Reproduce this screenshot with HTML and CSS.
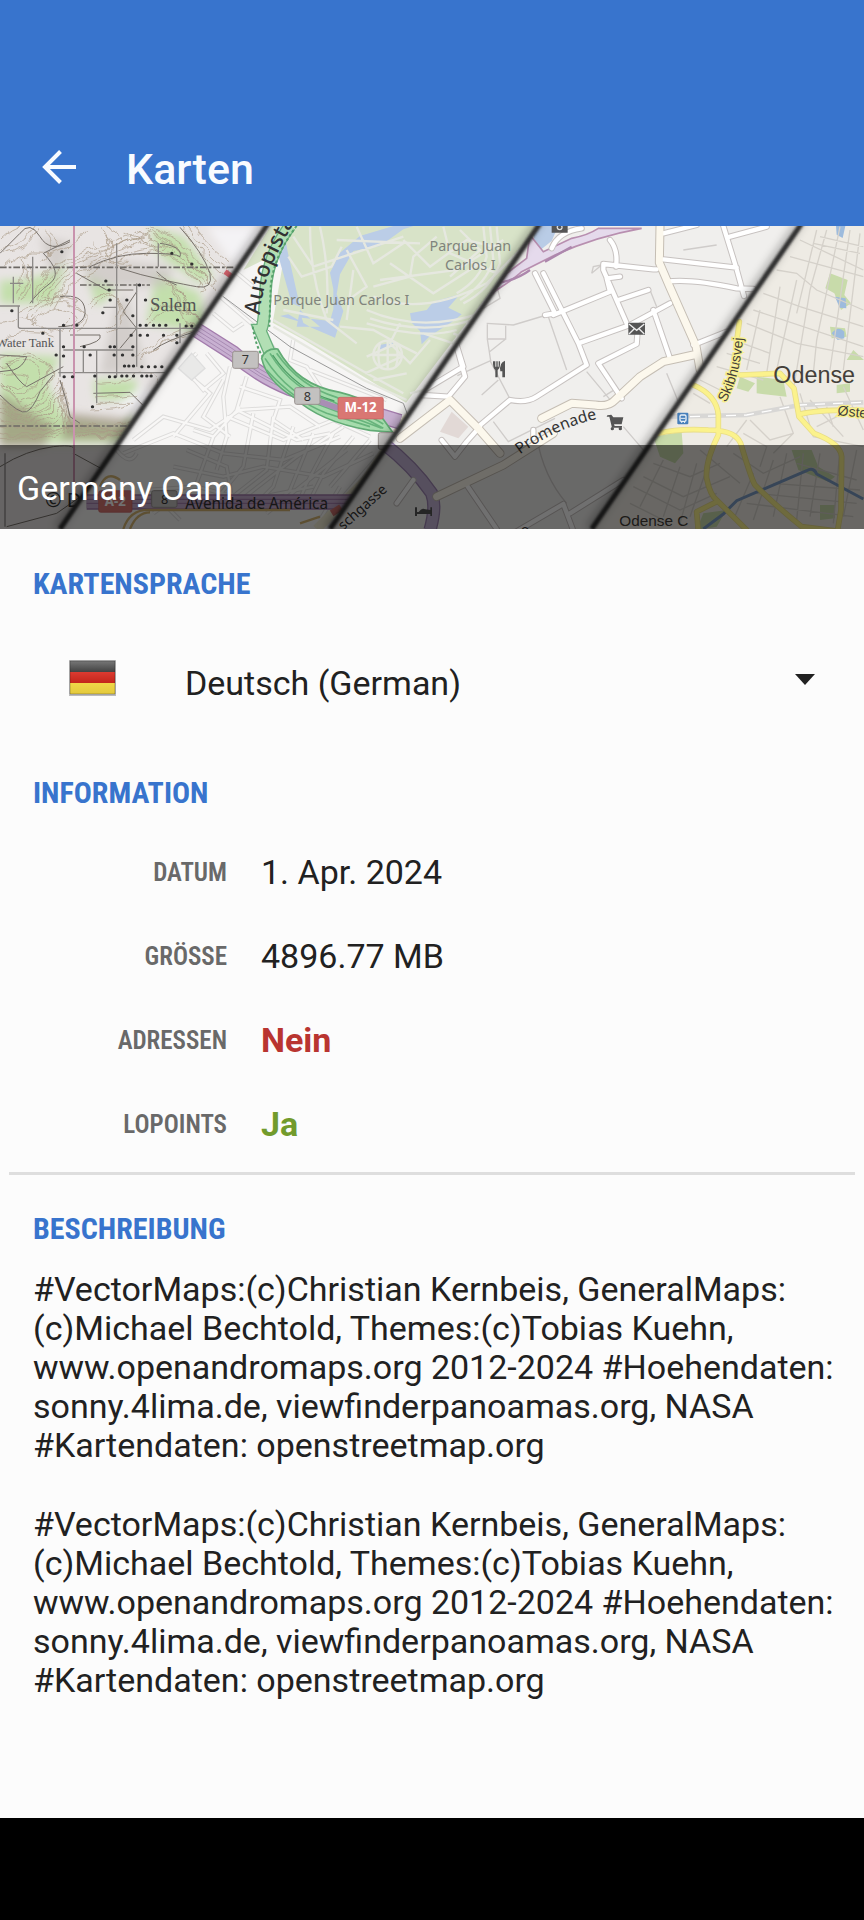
FILE: index.html
```html
<!DOCTYPE html>
<html lang="de">
<head>
    <meta charset="UTF-8">
    <meta name="viewport" content="width=device-width, initial-scale=1">
    <title>Karten</title>
    <link rel="stylesheet" href="styles.css">
</head>
<body>
<header class="toolbar">
    <button type="button" class="back" aria-label="Zurück">
        <svg viewBox="0 0 34 34" width="34" height="34"><path d="M18.500 1.500 3 17l15.500 15.500M3 17h31"/></svg>
    </button>
    <h1>Karten</h1>
</header>
<main>
    <div class="hero">
        <svg class="map" viewBox="0 18 2592 909" preserveAspectRatio="xMidYMid slice">
            <defs>
                <clipPath id="c1"><path d="M0 0H812L180 927H0z"/></clipPath>
                <clipPath id="c2"><path d="M812 0H1627L990 927H180z"/></clipPath>
                <clipPath id="c3"><path d="M1627 0H2412L1775 927H990z"/></clipPath>
                <clipPath id="c4"><path d="M2412 0H2592V927H1775z"/></clipPath>
                <filter id="soft" x="-10%" y="-10%" width="120%" height="120%"><feGaussianBlur stdDeviation="3"/></filter>
                <filter id="shade" x="-10%" y="-10%" width="120%" height="120%"><feGaussianBlur stdDeviation="13"/></filter>
                <filter id="wavy" x="0" y="0" width="100%" height="100%">
                    <feTurbulence type="fractalNoise" baseFrequency="0.02" numOctaves="2" seed="4"/>
                    <feDisplacementMap in="SourceGraphic" scale="40" xChannelSelector="R" yChannelSelector="G"/>
                </filter>
                <!-- Straßen, doppelt gezeichnet: Rand und Fläche -->
                <path id="streets2" d="M640 280l60 50 30-20M655 225l110 95M700 150l60 50M590 400l-40 40 60 70 60-50-50-60M560 460l70 60-110 130M670 480l-60 110 80 60M690 440l-20 90 10 120-30 100M740 470l-30 100 180 90 100-20M720 560l-80 90-60-20M400 660l90-70 140 40 90-60 150-10 90 60M370 700l150-60 150 60 180 20 170-70M640 650l-50 140-130 90M760 580l-30 160-100 120M820 590l-20 160-140 110M880 620l-60 180-60 60M940 640l-70 170-50 50M1000 640l-80 150-30 70M1060 650l-90 110-50 100M1110 660l-120 140M520 740l150 30 120-30 180 30 150-70M440 810l150-10 150 40 200-40M380 850l100-10 60 60M560 690l120 50 20 120M720 500l120 40-20 60 90 60M680 590l170 70 150-60 110 50M780 330l60 80-20 60M880 360l-10 60 50 20 40 60-40 10M930 450l230 90M350 690q40 50 60 10M710 850l180-140 140-90M800 880l240-190M1020 800l-60 100M1150 690l-180 210M1100 860l-40 60"/>
                <path id="park" d="M865 110l40 60 90-30 30-60M880 50l60 90 90-30 180-60M930 20q0 150 50 280l90 70M960 20q30 130 20 260M1040 90l60 110-70 50M1010 60l250 10M1070 20l50 110 90-60M1140 180l230-30 140-90M1170 130l130 90 140-90M1120 230q150 60 340-40l100-100M1100 270q160 70 340 10 70-50 130-170M1110 295q180 60 350-10M1100 310q170 50 270 20M1020 320l100 10 90 50M1120 200l110-30 10-60 70-60M1210 60l80 80 110-80 80 20M1380 30l60 60-90 80M1330 20l20 80 140 60M1450 20l10 90q-20 70-90 110M1470 20l10 100q-20 70-100 120M1490 20l10 110q-30 80-110 120M1200 310l-30 60 60 60 60-70M1100 410l90-40 60 30M1095 460l110-50M1270 340l90 30 60-70M1330 440l120-60-90-40M1320 460l50 80-60-40-80 20M1350 480l90-40M1120 480l100-20M820 300l280 160 110 60M820 320l270 160 130 60M1415 440l-10 80M1450 330l-40 100M1000 300l-150-30M1060 150l-20 150"/>
                <path id="streets3" d="M1240 530L1390 440 1365 360M1345 530l-80-5M1345 530l50-60-25-90M1435 620L1530 540Q1580 550 1610 530L1760 435 1735 370 1630 160M1440 620l-40 45-35 45-40-50M1605 160l60 120-30 5M1660 285L1830 215M1735 370L1890 315 2010 250M1880 310L1810 150 1810 132 1960 148 1970 148M1830 215l-10-40 40-5M1855 240l90-30M1830 60q25 30 18 80M1865 535L1795 430 1910 372 1912 345M1960 270l50 145M1990 118l220 25M2000 185q70-10 210 20l50 2M1990 40l100-25M2170 18l40 130 22 80M2190 50l110-30M2080 375l100-40M1600 655v-25M1400 795l90 132M1690 852l28 75M1540 940l150-88M1710 880l160-100M1240 780l-50 70M1655 85q20-50 90-60"/>
                <path id="main3" d="M1980 18l-2 110 30 70 80 180 12 70M2080 405l-90 20-70 45-75 70q-20 22-60 15l-70-5-90 45M1200 655L1350 540 1430 620 1500 700M1310 830l200-95 150-95"/>
                <path id="minor4" d="M2400 60l190 90M2370 110l220 60M2330 150l60 10 60 50 140 60M2290 220l110 40 190 60M2260 270l330 110M2240 310l150 60 200 40M2450 30l-60 250M2480 30l-50 180-50 300M2520 20l-70 340-10 100M2550 30l-60 420M2580 40l-50 410M2340 200l-40 260M2390 180l-60 270M2280 270l-40 180M2440 70l140 30M2460 50l130 30M2200 360l110 40M2180 400l100 30M2150 440l140 40M2100 480l60 30M2080 520l50 30M2400 520l40 130 150 30M2340 530l40 110-60 60M2430 540l100 110M2480 560l20 60M2250 600l60 60 70-20M2230 640l70 40-20 60M2200 700l90 60 110-50M2180 680l60-80M1960 730l110 40 90-40M1930 770l120 60 140-60M1900 800l140 70 110-50M1990 720l-70 140M2040 740l-50 150M2090 730l-50 180M2140 690l-70 200M2260 760l-60 140M2320 720l-60 180M2360 700l-40 190M2410 700l-20 200M2460 700l-30 190M2520 690l-20 220M2570 690l-40 200M2270 820l300 30M2240 850l320 40M2320 790l260 20M2390 730l180 50M1890 850l120 60M2100 690l120 100M2530 500l60 130M2450 620l80-40 60 10"/>
                <path id="yellow4" d="M2218 305l-8 60M2220 465l120-5 42 45 15 85 45 50q80 30 83 70l-2 160-10 60M2397 583q60-15 190-12M2080 495q70 30 75 90l0 60q-40 80-35 130 10 50 30 65l90 90M1975 640q60-15 150-10 90 0 100 50 30 100 40 115 60 60 140 125l160 20M2150 845l-60 30 5 60"/>
            </defs>

            <!-- topografische Karte -->
            <g clip-path="url(#c1)">
                <path fill="#e8e4e3" d="M0 0h820v940H0z"/>
                <g filter="url(#shade)">
                    <path fill="#c3dfac" d="M0 180q110 10 200-50l-40 120H0zM260 160l90 50-60 50zM470 160l130 60 20 120-180-30zM450 20l100 30 90 120-40 20-130-90zM0 400l180 10-40 80 60 110 160 20 40-40v90H0zM280 480h130v60H290z"/>
                    <path fill="#8f836c" opacity=".6" d="M200 580l200 20v60H180zM0 520l170 100-40 60H0z"/>
                    <path fill="#c4bfbb" opacity=".6" d="M120 50l100 20-60 120zM250 110l270 30-20 60H260zM380 220l60 240H300l50-210z"/>
                    <path fill="#f4f3f5" d="M620 20h180l-90 130zM430 500l60 30-60 60-80-40z"/>
                </g>
                <g class="contour light" filter="url(#wavy)">
                    <path d="M0 60Q40 20 70 18M0 90Q70 80 100 18M10 140Q60 90 130 100T260 30M110 230Q120 130 260 90T420 30M130 240Q170 150 270 110T450 40M150 260Q190 170 290 130T520 70M40 230Q90 170 60 110M60 240Q110 170 80 120M80 300q50-90 130-60t20 90M90 310q70-60 120-40t0 60M260 250q60-60 90-10t-30 80M380 40q70 20 160 90t50 70M400 30q90 30 160 100t60 60M430 20q80 30 150 110t50 60M450 18q90 40 150 110t40 70M540 18q70 100 130 150M560 18q60 90 130 140M580 18q50 70 110 110M470 160q50 10 60 80t60 80M490 170q50 20 60 70t60 60M500 190q50 20 60 60t50 50M440 300q40-60 100-40t70 60M410 420q60-80 170-100M430 410q60-50 130-60M0 420q80-30 130 0t-30 110l-40 20-60-60M0 440q70-20 110 0t-30 80l-30 10-50-50M0 460q50-10 80 0t-20 50l-60-20M0 540q70 50 130 0t50-60l30 120M0 560q80 50 140 0t40-50l20 110M0 580q90 50 150-10t30-30l20 80M0 600q90 40 150-10t30 0l10 40M0 620q90 30 180 0M0 640q90 20 180-10M0 655q120 10 200-20M120 660q60-60 130-50t150 50M200 590q80 60 200 10M210 620q60 40 180 0M220 640q70 20 150 0M270 490q70 10 130-20t80 40M280 530q70 0 140-10M290 550l110 0M270 570q80 0 120-15M300 30q40 20 20 60t60 40M280 60q30 20 20 60M320 20q60 20 50 50M130 30q40 30 20 60t-30 30M150 30q40 30 30 60M0 310q80-30 120 10t90-20M0 360q80-40 160-10M60 270q80-10 140-60"/>
                    <path transform="translate(9 12)" d="M0 90Q70 80 100 18M110 230Q120 130 260 90T420 30M130 240Q170 150 270 110T450 40M150 260Q190 170 290 130T520 70M40 230Q90 170 60 110M80 300q50-90 130-60t20 90M260 250q60-60 90-10t-30 80M380 40q70 20 160 90t50 70M430 20q80 30 150 110t50 60M470 160q50 10 60 80t60 80M500 190q50 20 60 60t50 50M440 300q40-60 100-40t70 60M410 420q60-80 170-100M0 420q80-30 130 0t-30 110l-40 20-60-60M0 540q70 50 130 0t50-60l30 120M0 560q80 50 140 0t40-50l20 110M0 600q90 40 150-10t30 0l10 40M200 590q80 60 200 10M210 620q60 40 180 0M300 30q40 20 20 60t60 40"/>
                </g>
                <g class="contour">
                    <path d="M0 100L60 40q30-40 60 10t90 15M90 250q20-30 60-60t-20-90l80-40M270 140q80-40 170-40t100 10q10-30-60-40M360 145q60 20 130 35t100 20q50 10 40-40Q610 100 540 22M470 155q30 30 60 40M180 230q70-10 75 40t-80 50M230 160l90 50 80 0M0 405l80 5q-10 30-40 40l-40 5M20 430q40 60 60 70l110-60M0 525q60 60 80 50t40-60l40-50M280 520l110-3 40 40M180 480q20 60 30 110l30 20M460 390q40-30 140-60M210 345l90 0q10 20-60 35M0 740q80-50 160-60t60 20l110 60M20 920l150-40 100-70M410 215l-40 60 40 50-50 60"/>
                </g>
                <path class="dash" d="M0 142h700M240 195h210M0 618h400"/>
                <path class="track" d="M55 260v60q0 5 10 5h540M180 325v145M175 458h320M190 390h210M350 70v400M410 190v250M250 390v70M290 390v160M0 258h60M40 170v80M30 190h40M98 110v140M475 70v70M310 262h40M540 310v60M15 700v220"/>
                <path stroke="#c993ae" stroke-width="6" fill="none" d="M222 18v780"/>
                <path class="dots" d="M185 95h1M317 183h1M327 210h1M330 240h1M380 240h1M436 240h1M308 278h1M398 287h1M190 316h1M230 316h1M128 340h1M35 272h1M418 195h1M420 316h1M438 316h1M460 316h1M478 316h1M497 316h1M558 318h1M575 318h1M532 300h1M393 346h1M420 346h1M442 346h1M490 346h1M530 346h1M530 368h1M190 380h1M252 380h1M330 380h1M343 380h1M398 380h1M168 405h1M190 408h1M270 405h1M342 405h1M367 405h1M398 405h1M373 438h1M386 438h1M400 438h1M425 440h1M445 440h1M465 440h1M485 440h1M192 470h1M217 470h1M284 468h1M328 470h1M345 470h1M365 468h1M380 468h1M400 468h1M425 468h1M440 468h1M453 468h1M277 560h1M515 100h1M575 132h1"/>
                <text class="serif" x="450" y="272" font-size="56">Salem</text>
                <text class="serif" x="-12" y="382" font-size="38">Water Tank</text>
                <text class="sans" x="135" y="862" font-size="60">© D</text>
                <path stroke="#dd6570" stroke-width="16" d="M675 155l25 18"/>
            </g>

            <!-- Madrid -->
            <g clip-path="url(#c2)">
                <path fill="#f6f5f4" d="M180 0h1450v940H180z"/>
                <path fill="#d8e3c8" d="M730 150L812 18h56l-50 290 90 50 310 190L1460 230 1627 0H880l-50 100z"/>
                <path fill="#bbcde7" d="M850 20l12 70 38 170-25-10-45-160zM890 320l70 0-60-50M840 288l70 20-5-15 85 10 10-35 0-60-10-50 30-60 60-50 100-30 60-40h120l-150 50-70 50-80 15-40 70-10 60 20 50-25 80-70-30-70-40zM1230 280l50-10 20-25 80-22-35 40 20 10 20 10-25 20-70 45-25 25-5-40-25-25zM1140 375l40-8-5 15-40 10z"/>
                <use href="#park" class="parkpath"/>
                <circle class="parkpath" cx="1163" cy="405" r="43"/><path class="parkpath" d="M1120 405h86M1163 362v86M1140 370q-10 35 0 70M1188 370q10 35 0 70"/>
                <use href="#streets2" class="casing2"/><use href="#streets2" class="road2"/>
                <path fill="#e9e9e8" stroke="#dedede" stroke-width="4" d="M575 400l40 45-40 35-40-35z"/>
                <path stroke="#f1ecd3" stroke-width="28" fill="none" d="M950 927l150-150 120-180 240-190"/>
                <path class="rail" d="M670 230l200 150 230 125 110 45 30 80"/>
                <path stroke="#a37cac" stroke-width="47" fill="none" d="M590 330l110 70q80 70 170 105l330 100"/>
                <path stroke="#c8b0d1" stroke-width="39" fill="none" d="M590 330l110 70q80 70 170 105l330 100"/>
                <path stroke="#a88cb3" stroke-width="3" fill="none" d="M590 330l110 70q80 70 170 105M590 342l105 68q80 65 170 100M590 318l110 70q80 70 170 105"/>
                <path stroke="#9f78a8" stroke-width="46" d="M260 846h820"/><path stroke="#c4aacc" stroke-width="38" d="M260 846h820"/><path stroke="#9f78a8" stroke-width="3" d="M260 838h820M260 850h820"/>
                <path class="ochre" d="M300 800q20-50 60-20M370 927q20-60 80-57h420M390 927q20-50 60-50M900 910l60-20"/>
                <g fill="none">
                    <path stroke="#69b07c" stroke-width="38" d="M870 18Q800 110 796 220T780 330l30 70"/>
                    <path stroke="#b2dfb4" stroke-width="30" d="M870 18Q800 110 796 220T780 330l30 70"/>
                    <path stroke="#55a16a" stroke-width="6" stroke-dasharray="8 7" d="M890 18Q820 110 812 200l-4 120M758 320q10 60 30 90"/>
                    <path fill="#a5dcac" stroke="#62ab75" stroke-width="5" d="M785 415q10-30 48-28 60 110 187 130 60 15 100 40l58 80-68-6q-150-25-230-100-80-50-95-116z"/>
                    <path stroke="#68b47c" stroke-width="5" d="M810 400q70 115 190 145l150 80M830 400q70 100 180 132l140 80M795 415q70 110 190 150l160 60M800 450q80 90 180 130l130 40"/>
                    <path stroke="#4c9c65" stroke-width="4" d="M818 405q70 105 185 138"/>
                </g>
                <path stroke="#a98eb4" stroke-width="18" d="M960 545l55 20"/>
                <g fill="#c3c1c0" stroke="#99928f" stroke-width="3">
                    <rect x="698" y="394" width="77" height="51" rx="6"/><rect x="884" y="503" width="76" height="50" rx="6"/>
                    <rect x="455" y="812" width="76" height="50" rx="6"/><rect x="1135" y="638" width="76" height="50" rx="6"/>
                </g>
                <g fill="#d97773" stroke="#c65f5f" stroke-width="2"><rect x="1014" y="532" width="136" height="65" rx="6"/><rect x="296" y="812" width="100" height="65" rx="6"/></g>
                <text class="sans" x="736" y="433" font-size="38" text-anchor="middle">7</text>
                <text class="sans" x="922" y="542" font-size="38" text-anchor="middle">8</text>
                <text class="sans" x="494" y="853" font-size="38" text-anchor="middle">8</text>
                <text class="shield" x="1082" y="577" font-size="40">M-12</text>
                <text class="shield" x="346" y="858" font-size="40">A-2</text>
                <text class="sans grey" x="820" y="256" font-size="43">Parque Juan Carlos I</text>
                <text class="sans grey" x="1411" y="93" font-size="43" text-anchor="middle">Parque Juan</text>
                <text class="sans grey" x="1411" y="149" font-size="43" text-anchor="middle">Carlos I</text>
                <text class="sans" x="556" y="866" font-size="46">Avenida de América</text>
                <path id="autop" fill="none" d="M780 285Q785 160 900 -20"/>
                <text class="sans strong" font-size="66"><textPath href="#autop">Autopista</textPath></text>
                <path stroke="#d97773" stroke-width="20" d="M995 880l28-18"/>
            </g>

            <!-- Innenstadt -->
            <g clip-path="url(#c3)">
                <path fill="#f0efed" d="M980 0h1440v940H980z"/>
                <path fill="#b9cce6" d="M1600 18h75l-20 45-50 40z"/>
                <path fill="#e2d9d6" d="M1355 575l50 45-30 35-55-20z"/>
                <path fill="none" stroke="#cfccca" stroke-width="4" d="M1450 265l50-30-10-40M1460 310l80 5 100-30M1462 312v45h55v-40M1462 357l10 65-100 45M1517 357l-50 40M1470 422l60 115M1645 290l55 160M1760 455l75 90M1480 605l45 60 140-70M1610 650q20 120 90 200M2000 460l35 85M1870 620l120 140M1445 525l50-45M1775 160l30-25M1775 160l5-20 25-5M1950 210l20 50M2050 90l100-15M1810 530l40-25"/>
                <path fill="#e5daec" stroke="#b88fb0" stroke-width="5" d="M1480 220l40-60 60-45 10-70 40 50 85-40q50-10 80-30h130q-140 25-260 80-60 30-100 50-20 20-90 65z"/>
                <path stroke="#ad87ad" stroke-width="7" fill="none" d="M1490 190q60-10 100-40M1635 125l80-45"/>
                <path fill="none" stroke="#9d85b2" stroke-width="40" d="M1150 670q90 70 145 150 15 40-5 110"/>
                <path fill="none" stroke="#c5b4d6" stroke-width="32" d="M1150 670q90 70 145 150 15 40-5 110"/>
                <use href="#streets3" class="casing3"/><use href="#main3" class="casing3m"/>
                <use href="#streets3" class="road3"/><use href="#main3" class="road3m"/>
                <!-- Symbole -->
                <g fill="#555">
                    <path d="M1885 308h50v36h-50z"/><path stroke="#eee" stroke-width="4" fill="none" d="M1887 312l23 19 23-19M1887 342l16-16M1933 342l-16-16"/>
                    <path d="M1482 424h4v16h3v-16h4v16h3v-16h4q2 20-7 26v22h-7v-22q-8-6-7-26zM1515 422v50h-8v-18h-6q-4-26 14-32z"/>
                    <path d="M1655 12h48v26h-48z"/><circle cx="1679" cy="22" r="9" fill="#ddd"/><circle cx="1679" cy="22" r="5"/>
                    <path d="M1822 586l12-2 6 8h30l-5 21h-23l2 5h22v5h-30l-8-33h-8z"/><circle cx="1837" cy="626" r="5"/><circle cx="1861" cy="626" r="5"/>
                    <path d="M1245 862h6v14h5q10-14 20-8l15 2v-8h5v26h-5v-6h-40v6h-6z"/>
                </g>
                <path id="prom" fill="none" d="M1560 704Q1670 620 1820 590"/>
                <text class="sans" font-size="47"><textPath href="#prom">Promenade</textPath></text>
                <text class="sans" font-size="42" transform="translate(1030 932) rotate(-42)">schgasse</text>
                <text class="sans" font-size="40" x="1563" y="943">o</text>
            </g>

            <!-- Odense -->
            <g clip-path="url(#c4)">
                <path fill="#eeebe4" d="M1770 0h822v940h-822z"/>
                <path fill="#c8dbaa" d="M2490 160l53 20-10 45 20 25-30 20-20-50-27-15zM2270 470l80 10 10 50-90-10zM2220 470l45 20-20 25-35-10zM1960 650l85-15 5 65-25 30-45-20zM2490 320l45 5 5 25-45 5zM2510 495l40-5v25l-40 5zM2540 420l20-30 32 30zM2375 690h60l20 50 50 30-20 15-90-35zM2460 855h45v40l-45 5zM2110 880l70-10-30 50-60 10z"/>
                <path fill="#9dbbdd" d="M2508 18h28l-8 36-18-10zM2505 230l32 5 2 30-20-2zM2495 340q20-25 38-5v20l-20 5z"/>
                <use href="#minor4" fill="none" stroke="#d5d1ca" stroke-width="4"/>
                <path fill="none" stroke="#d8d7d5" stroke-width="14" d="M2000 590l240-5 160-30 190-8"/><path stroke="#fff" stroke-width="4" stroke-dasharray="30 24" fill="none" d="M2070 590l170-5 160-30 190-8"/>
                <path fill="none" stroke="#7d9dc6" stroke-width="9" d="M2110 927l60-45 40-40 210-90q20-12 30 10l140 75"/>
                <use href="#yellow4" class="yellowcase"/><use href="#yellow4" class="yellow"/>
                <rect x="2032" y="578" width="33" height="35" rx="3" fill="#4780bb"/><rect x="2040" y="585" width="18" height="19" rx="4" fill="none" stroke="#e9f0f7" stroke-width="4"/><path stroke="#e9f0f7" stroke-width="3" d="M2042 595h14M2044 609l4-5M2055 609l-4-5"/>
                <text class="arial" x="2320" y="490" font-size="70">Odense</text>
                <text class="arial" x="1858" y="917" font-size="46">Odense C</text>
                <text class="arial halo" x="2512" y="586" font-size="42" transform="rotate(5 2512 586)">Østerbro</text>
                <path id="skib" fill="none" d="M2176 548Q2224 470 2230 330"/>
                <text class="arial halo" font-size="42"><textPath href="#skib">Skibhusvej</textPath></text>
            </g>

            <g fill="none">
                <path filter="url(#shade)" stroke="#000" stroke-opacity=".3" stroke-width="22" d="M804 0L172 927M1619 0L982 927M2404 0L1767 927"/>
                <path filter="url(#soft)" stroke="#303030" stroke-width="15" d="M812 0L180 927M1627 0L990 927M2412 0L1775 927"/>
            </g>
        </svg>
        <div class="caption">Germany Oam</div>
    </div>

    <section class="language">
        <h2><label for="lang">KARTENSPRACHE</label></h2>
        <div class="lang-row">
            <svg class="flag" viewBox="0 0 47 36" width="47" height="36">
                <defs>
                    <linearGradient id="fb" x2="0" y2="1"><stop stop-color="#777"/><stop offset="1" stop-color="#424242"/></linearGradient>
                    <linearGradient id="fr" x2="0" y2="1"><stop stop-color="#dc3b31"/><stop offset="1" stop-color="#c3251b"/></linearGradient>
                    <linearGradient id="fy" x2="0" y2="1"><stop stop-color="#f0d748"/><stop offset="1" stop-color="#e3c93c"/></linearGradient>
                </defs>
                <path fill="#bbb" d="M0 0h47v36H0z"/>
                <path fill="url(#fb)" d="M1 1h45v11H1z"/>
                <path fill="url(#fr)" d="M1 12h45v11H1z"/>
                <path fill="url(#fy)" d="M1 23h45v11H1z"/>
                <path fill="none" stroke="#000" stroke-opacity=".25" d="M1 1h45v33H1z"/>
            </svg>
            <div class="select-box">
                <select id="lang" name="lang">
                    <option value="de" selected>Deutsch (German)</option>
                    <option value="en">English</option>
                </select>
                <svg class="arrow" viewBox="0 0 20 11" width="20" height="11"><path d="M0 0h20L10 11z"/></svg>
            </div>
        </div>
    </section>

    <section class="information">
        <h2>INFORMATION</h2>
        <dl>
            <dt>DATUM</dt>
            <dd>1. Apr. 2024</dd>
            <dt>GRÖSSE</dt>
            <dd>4896.77 MB</dd>
            <dt>ADRESSEN</dt>
            <dd class="no">Nein</dd>
            <dt>LOPOINTS</dt>
            <dd class="yes">Ja</dd>
        </dl>
    </section>

    <hr>

    <section class="description">
        <h2>BESCHREIBUNG</h2>
        <p>#VectorMaps:(c)Christian Kernbeis, GeneralMaps:<wbr>(c)Michael Bechtold, Themes:(c)Tobias Kuehn, www.openandromaps.org 2012-2024 #Hoehendaten: sonny.4lima.de, viewfinderpanoamas.org, NASA #Kartendaten: openstreetmap.org</p>
        <p>#VectorMaps:(c)Christian Kernbeis, GeneralMaps:<wbr>(c)Michael Bechtold, Themes:(c)Tobias Kuehn, www.openandromaps.org 2012-2024 #Hoehendaten: sonny.4lima.de, viewfinderpanoamas.org, NASA #Kartendaten: openstreetmap.org</p>
    </section>
</main>
<footer class="navbar"></footer>
</body>
</html>
```
FILE: styles.css
```css
*{
    box-sizing: border-box;
}
body,h1,h2,p,dl,dd{
    margin: 0;
    padding: 0;
}
body{
    display: flex;
    flex-direction: column;
    min-height: 100vh;
    background-color: #fcfcfc;
    color: #212121;
    font-family: Roboto, "Liberation Sans", sans-serif;
    font-size: 34px;
    line-height: 39px;
}
main{
    flex: 1;
}
.toolbar{
    display: flex;
    align-items: center;
    gap: 42px;
    padding: 112px 36px 0 34px;
    height: 226px;
    background-color: #3874cd;
    color: #f8fbff;
}
.toolbar h1{
    font-size: 43px;
    line-height: 50px;
    font-weight: 500;
}
.back{
    padding: 8px 8px 12px;
    border: 0;
    background: none;
    line-height: 0;
}
.back svg{
    fill: none;
    stroke: #f8fbff;
    stroke-width: 4;
}

/* Kartenbild */
.hero{
    position: relative;
}
.map{
    display: block;
    width: 100%;
    height: auto;
}
.caption{
    position: absolute;
    left: 0;
    right: 0;
    bottom: 0;
    padding: 24px 17px 21px;
    background-color: rgba(0,0,0,0.56);
    color: #fff;
}
.sans{
    font-family: "Noto Sans", sans-serif;
    fill: #333;
}
.strong{
    font-weight: 500;
}
.grey{
    fill: #80847c;
}
.serif{
    font-family: "Liberation Serif", serif;
    fill: #555;
}
.arial{
    font-family: "Liberation Sans", sans-serif;
    fill: #443f3a;
}
.halo{
    stroke: #f8ef8c;
    stroke-width: 8;
    paint-order: stroke;
}
.shield{
    font-family: "Noto Sans", sans-serif;
    font-weight: bold;
    fill: #fff;
    text-anchor: middle;
}
.contour{
    fill: none;
    stroke: #77716b;
    stroke-width: 3;
}
.contour.light{
    stroke: #a99a86;
    stroke-width: 2;
}
.dash{
    stroke: #6d6965;
    stroke-width: 5;
    stroke-dasharray: 20 6 8 6;
}
.track{
    fill: none;
    stroke: #8c8987;
    stroke-width: 4;
}
.dots{
    stroke: #333;
    stroke-width: 9;
    stroke-linecap: round;
}
.parkpath{
    fill: none;
    stroke: #e6e8e0;
    stroke-width: 7;
}
.casing2{
    fill: none;
    stroke: #dddcdb;
    stroke-width: 13;
}
.road2{
    fill: none;
    stroke: #f8f7f6;
    stroke-width: 7;
}
.rail{
    fill: none;
    stroke: #999;
    stroke-width: 3;
}
.ochre{
    fill: none;
    stroke: #d3b573;
    stroke-width: 7;
}
.casing3,.casing3m,.road3,.road3m,.yellow,.yellowcase{
    fill: none;
    stroke-linejoin: round;
    stroke-linecap: round;
}
.casing3{
    stroke: #c7c2c0;
    stroke-width: 19;
}
.casing3m{
    stroke: #c5beb4;
    stroke-width: 27;
}
.road3{
    stroke: #fff;
    stroke-width: 13;
}
.road3m{
    stroke: #fcf8ed;
    stroke-width: 21;
}
.yellowcase{
    stroke: #e8dd86;
    stroke-width: 17;
}
.yellow{
    stroke: #fbf28c;
    stroke-width: 12;
}

/* Inhalt */
h2{
    color: #3874cd;
    font-family: "Roboto Condensed", Roboto, sans-serif;
    font-size: 30px;
    line-height: 36px;
    font-weight: 700;
}
.language,.information,.description{
    padding: 0 20px 0 33px;
}
.language{
    padding-top: 37px;
}
.lang-row{
    display: flex;
    align-items: center;
    gap: 69px;
    margin-top: 34px;
    padding-left: 36px;
}
.flag{
    flex: none;
}
.select-box{
    position: relative;
    flex: 1;
}
.select-box select{
    display: block;
    appearance: none;
    width: 100%;
    height: 84px;
    padding: 10px 50px 0 0;
    border: 0;
    background: none;
    color: inherit;
    font: inherit;
}
.arrow{
    position: absolute;
    right: 29px;
    top: 38px;
    fill: #212121;
    pointer-events: none;
}
.information{
    padding-top: 55px;
}
dl{
    display: grid;
    grid-template-columns: 194px 1fr;
    column-gap: 34px;
    grid-auto-rows: 84px;
    align-items: center;
    margin-top: 19px;
}
dt{
    color: #696969;
    font-family: "Roboto Condensed", Roboto, sans-serif;
    font-size: 25px;
    font-weight: 600;
    text-align: right;
}
.no{
    color: #b93530;
    font-weight: 700;
}
.yes{
    color: #729b2c;
    font-weight: 700;
}
hr{
    height: 3px;
    margin: 6px 9px 0;
    border: 0;
    background-color: #dedede;
}
.description{
    padding-top: 36px;
}
.description p{
    margin-top: 23px;
}
.description p + p{
    margin-top: 40px;
}
.navbar{
    height: 102px;
    background-color: #000;
}
```
